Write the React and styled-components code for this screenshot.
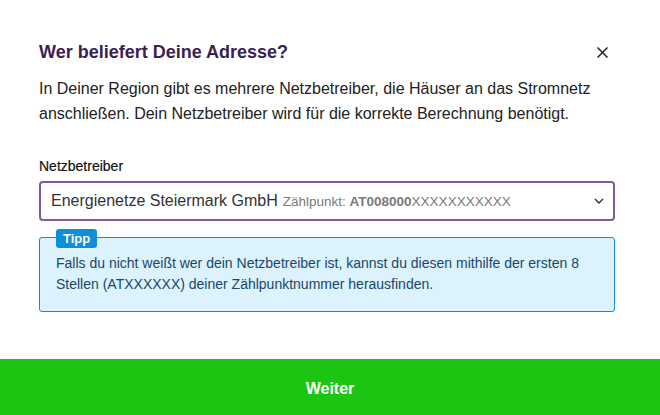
import styled, { createGlobalStyle } from "styled-components";

const Global = createGlobalStyle`
  html, body { margin: 0; padding: 0; background: #fff; }
  body { font-family: "Liberation Sans", Arial, sans-serif; }
`;

const Page = styled.div`
  width: 660px;
  height: 415px;
  display: flex;
  flex-direction: column;
  overflow: hidden;
`;

const Content = styled.div`
  flex: 1;
  padding: 41px 45px 0 39px;
`;

const Header = styled.div`
  display: flex;
  align-items: center;
  justify-content: space-between;
`;

const Title = styled.h2`
  margin: 0;
  font-size: 18px;
  font-weight: bold;
  color: #3b2152;
  line-height: 22px;
`;

const Close = styled.button`
  border: 0;
  background: none;
  padding: 0;
  width: 13px;
  height: 13px;
  display: flex;
  margin-right: 6px;
  cursor: pointer;
`;

const Desc = styled.p`
  margin: 13px 0 0;
  font-size: 16px;
  line-height: 25px;
  color: #222;
`;

const Label = styled.div`
  margin-top: 31px;
  font-size: 14px;
  color: #111;
  line-height: 18px;
  -webkit-text-stroke: 0.2px #111;
`;

const Select = styled.div`
  margin-top: 6px;
  height: 40px;
  box-sizing: border-box;
  border: 2px solid #7b5aa6;
  border-radius: 4px;
  display: flex;
  align-items: center;
  padding: 0 9px 0 10px;
  font-size: 16px;
  color: #333;
`;

const SelectText = styled.span`
  flex: 1;
  white-space: nowrap;
`;

const Meta = styled.span`
  font-size: 13.5px;
  color: #7a7a7a;
  margin-left: 5px;
  b { font-weight: bold; }
`;

const Tip = styled.div`
  position: relative;
  margin-top: 16px;
  background: #dcf2fd;
  border: 1px solid #0d8fd8;
  border-radius: 3px;
  padding: 15px 15px 16px 16px;
  font-size: 14px;
  line-height: 21px;
  color: #17486a;
`;

const Badge = styled.span`
  position: absolute;
  top: -9px;
  left: 16px;
  background: #0d8fd8;
  color: #fff;
  font-weight: bold;
  font-size: 13px;
  line-height: 19px;
  padding: 0 7px;
  border-radius: 3px;
`;

const Footer = styled.button`
  border: 0;
  height: 56px;
  width: 100%;
  padding-top: 4px;
  background: #1bc512;
  color: #fff;
  font-family: "Liberation Sans", Arial, sans-serif;
  font-weight: bold;
  font-size: 16px;
  cursor: pointer;
`;

export default function App() {
  return (
    <Page>
      <Global />
      <Content>
        <Header>
          <Title>Wer beliefert Deine Adresse?</Title>
          <Close aria-label="Schließen">
            <svg width="13" height="13" viewBox="0 0 13 13">
              <path d="M1.5 1.5L11.5 11.5M11.5 1.5L1.5 11.5" stroke="#222" strokeWidth="1.5" />
            </svg>
          </Close>
        </Header>
        <Desc>
          In Deiner Region gibt es mehrere Netzbetreiber, die Häuser an das Stromnetz
          anschließen. Dein Netzbetreiber wird für die korrekte Berechnung benötigt.
        </Desc>
        <Label>Netzbetreiber</Label>
        <Select>
          <SelectText>
            Energienetze Steiermark GmbH
            <Meta>
              Zählpunkt: <b>AT008000</b>XXXXXXXXXXX
            </Meta>
          </SelectText>
          <svg width="10" height="6" viewBox="0 0 10 6">
            <path d="M1 1L5 5L9 1" fill="none" stroke="#333" strokeWidth="1.4" />
          </svg>
        </Select>
        <Tip>
          <Badge>Tipp</Badge>
          Falls du nicht weißt wer dein Netzbetreiber ist, kannst du diesen mithilfe der ersten 8
          Stellen (ATXXXXXX) deiner Zählpunktnummer herausfinden.
        </Tip>
      </Content>
      <Footer>Weiter</Footer>
    </Page>
  );
}
